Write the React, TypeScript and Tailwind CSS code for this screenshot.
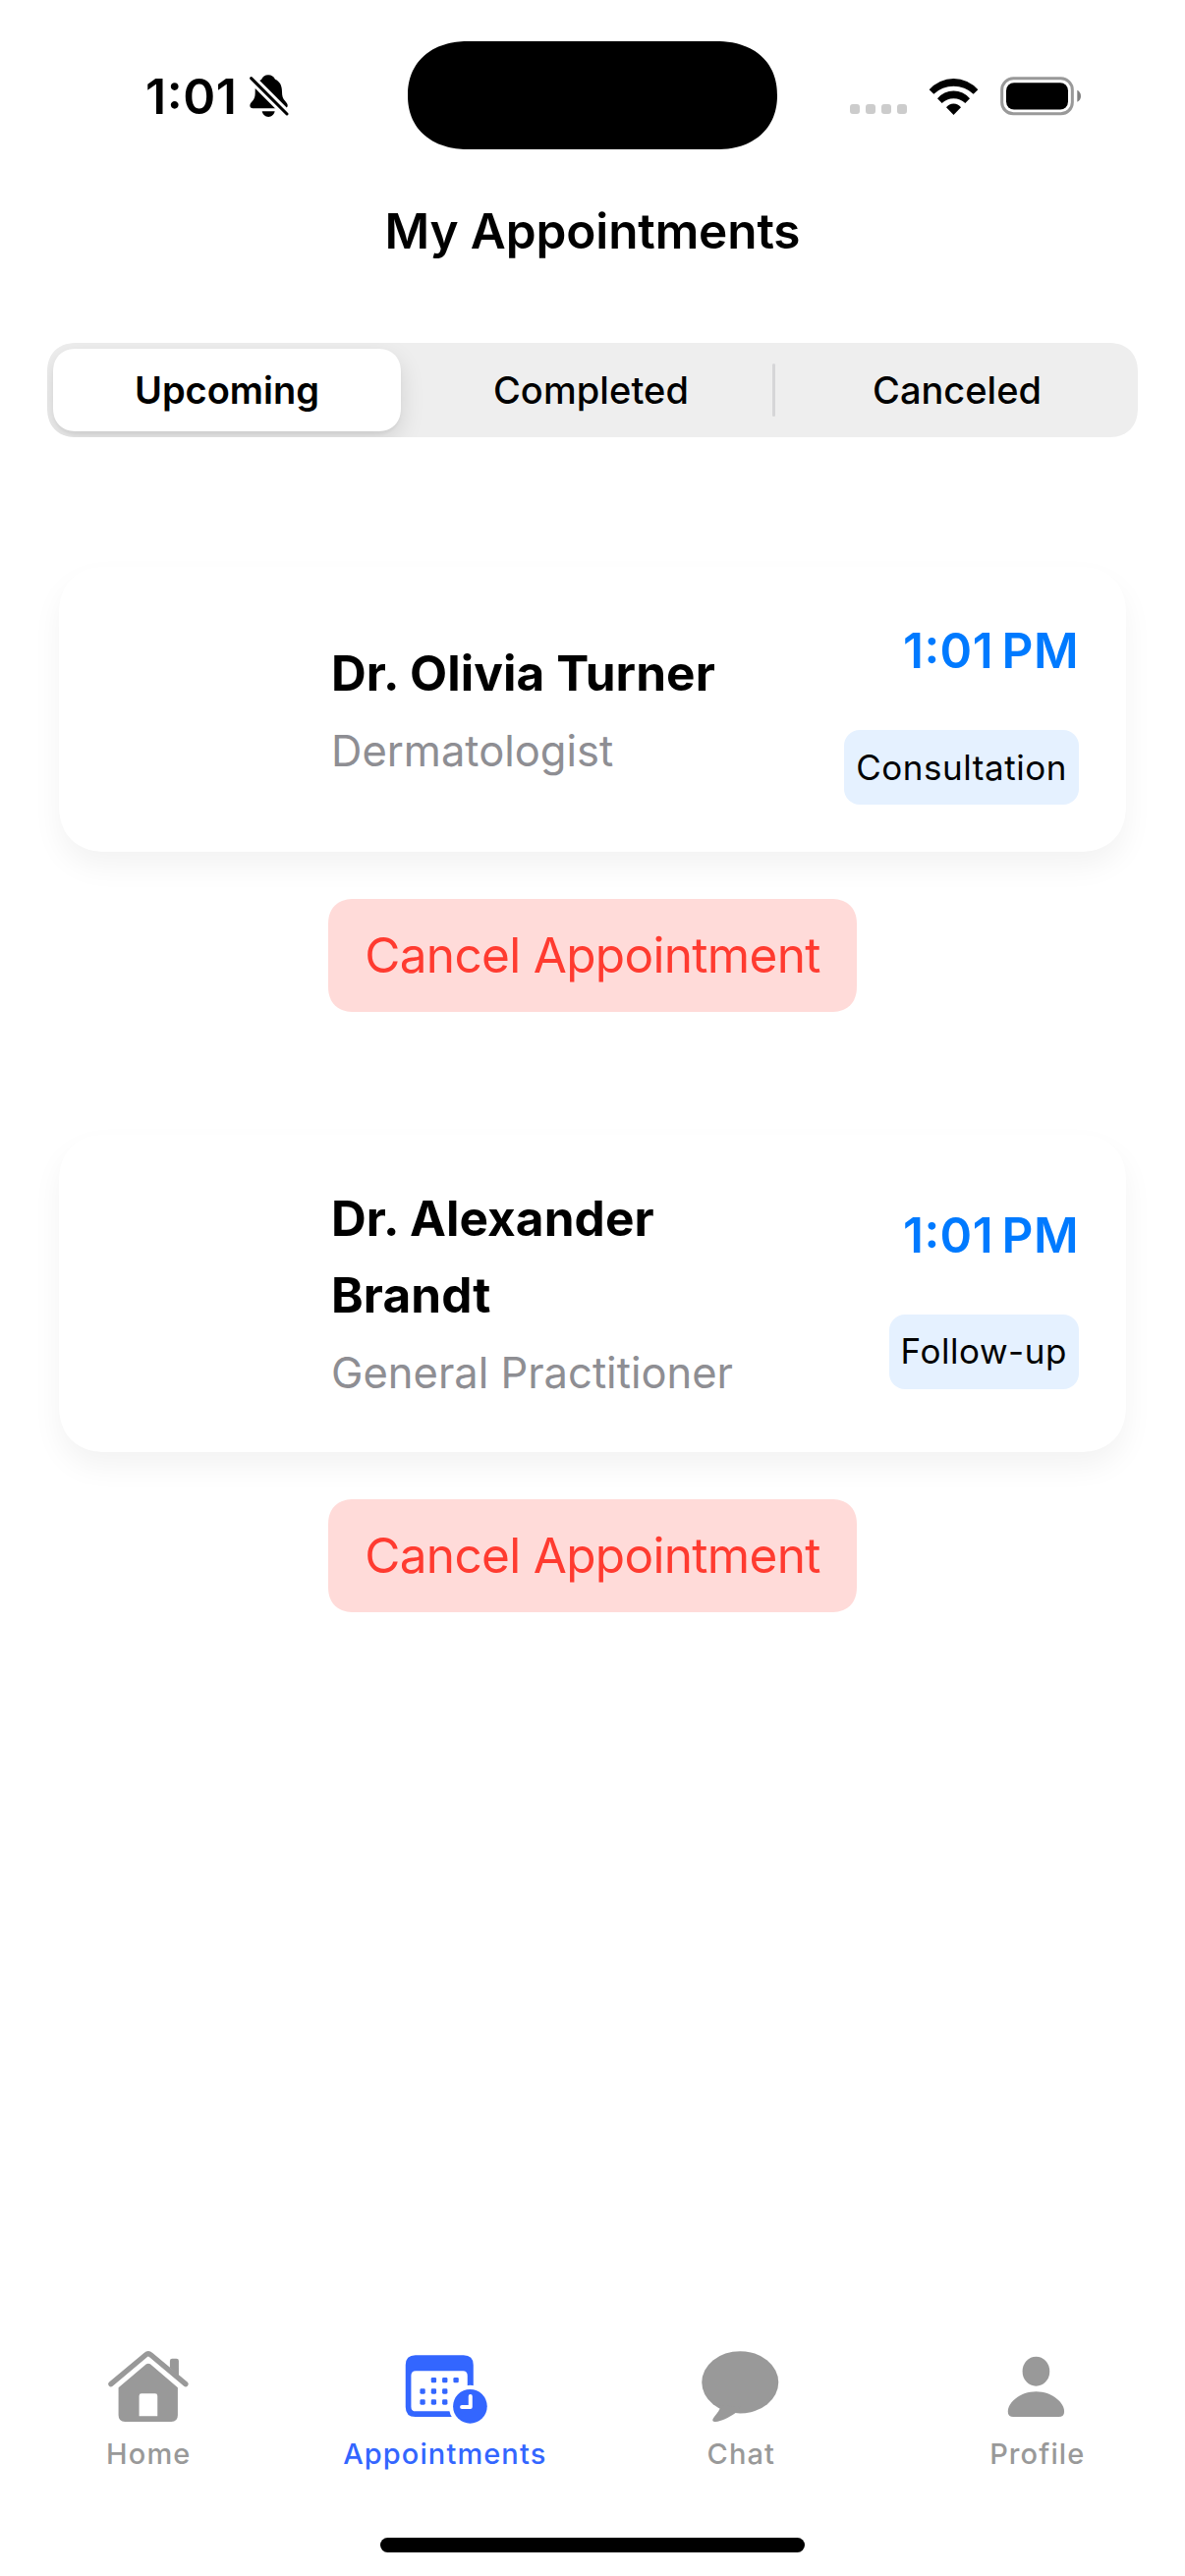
import type { ReactNode } from "react";

type Appointment = { name: string; specialty: string; time: string; kind: string; tall?: boolean };

const appointments: Appointment[] = [
  { name: "Dr. Olivia Turner", specialty: "Dermatologist", time: "1:01\u202FPM", kind: "Consultation" },
  { name: "Dr. Alexander Brandt", specialty: "General Practitioner", time: "1:01\u202FPM", kind: "Follow-up", tall: true },
];

function BellSlash() {
  return (
    <svg viewBox="464 140 120 132" className="h-[44px] w-[40px]" fill="black">
      <path d="M474 243C464 243 462 232 470 224C479 214 481 206 481 196V190C481 172 488 160 500 155C504 146 511 141 521 141C531 141 538 146 542 154C556 160 563 172 563 192C563 205 565 213 573 221L577 226C583 232 580 243 571 243Z" />
      <path d="M502 252H541C539 262 531 269 521.5 269C512 269 504 262 502 252Z" />
      <path d="M455 137L592 274" stroke="white" strokeWidth="27" />
      <path d="M469 151L578 260" stroke="black" strokeWidth="9" strokeLinecap="round" />
    </svg>
  );
}

function Wifi() {
  return (
    <svg viewBox="495 114 153 117" className="h-[39px] w-[51px]" fill="black">
      <path d="M497 151A99 99 0 0 1 646 151L632 164A88 88 0 0 0 511 164Z" />
      <path d="M522 178A64 64 0 0 1 621 178L607 192A51 51 0 0 0 536 192Z" />
      <path d="M549 205A28 28 0 0 1 594 205L571.500 228Z" />
    </svg>
  );
}

function Battery() {
  return (
    <svg viewBox="714 113 249 120" className="h-[40px] w-[83px]">
      <rect x="719" y="118.500" width="215" height="108" rx="35" fill="none" stroke="#999" strokeWidth="9" />
      <rect x="732" y="131.500" width="189" height="82" rx="24" fill="black" />
      <path d="M949 154C956 157 960 164 960 172C960 180 956 187 949 190Z" fill="#808080" />
    </svg>
  );
}

function HomeIcon() {
  return (
    <svg viewBox="77.250 60 270 240" className="h-[80px] w-[90px]" fill="currentColor">
      <path d="M98 170L204 81Q212 74 220 81L326 170" fill="none" stroke="currentColor" strokeWidth="16" strokeLinecap="round" />
      <path d="M278 120V99Q278 92 285 92H298Q305 92 305 99V145Z" />
      <path
        fillRule="evenodd"
        d="M121 181L206 109Q212 105 218 109L302 181V265Q302 285 282 285H141Q121 285 121 265ZM184 206V268H240V206Q240 199 233 199H191Q184 199 184 206Z"
      />
    </svg>
  );
}

const calendarDots = [
  [1085, 158], [1119, 158], [1153, 158],
  [1051, 192], [1085, 192], [1119, 192],
  [1051, 225], [1085, 225], [1119, 225],
];

function CalendarIcon() {
  return (
    <svg viewBox="981.750 60 270 240" className="h-[80px] w-[90px]" fill="currentColor">
      <path
        fillRule="evenodd"
        d="M1029 82H1176Q1206 82 1206 112V240Q1206 270 1176 270H1029Q999 270 999 240V112Q999 82 1029 82ZM1030 130Q1016 130 1016 144V239Q1016 253 1030 253H1174Q1188 253 1188 239V144Q1188 130 1174 130Z"
      />
      {calendarDots.map(([x, y]) => (
        <rect key={`${x}-${y}`} x={x - 8} y={y - 8} width="16" height="16" rx="4" />
      ))}
      <circle cx="1196" cy="238" r="65" fill="white" />
      <circle cx="1196" cy="238" r="52" />
      <path d="M1197 207V240H1171" fill="none" stroke="white" strokeWidth="12" strokeLinecap="round" strokeLinejoin="round" />
    </svg>
  );
}

function ChatIcon() {
  return (
    <svg viewBox="146.250 60 270 240" className="h-[80px] w-[90px]" fill="currentColor">
      <ellipse cx="279" cy="164.500" rx="117" ry="95" />
      <path d="M217 235V245C213 256 203 264 196 276C193 282 197 286 204 285C222 284 243 273 264 259L280 240Z" />
    </svg>
  );
}

function PersonIcon() {
  return (
    <svg viewBox="1050.750 60 270 240" className="h-[80px] w-[90px]" fill="currentColor">
      <ellipse cx="1184" cy="131" rx="41.500" ry="45" />
      <path d="M1098 254C1098 226 1136 193 1184 193C1232 193 1270 226 1270 254Q1270 270 1253 270H1115Q1098 270 1098 254Z" />
    </svg>
  );
}

function StatusBar() {
  return (
    <div className="flex h-[194px] shrink-0 pt-[42px]">
      <div className="flex h-[112px] w-[415px] items-center pl-[148px]">
        <span className="text-[50px] leading-[60px] font-semibold tracking-[0.6px]">1:01</span>
        <div className="ml-[12px]">
          <BellSlash />
        </div>
      </div>
      <div className="h-[110px] w-[376px] rounded-[62px/55px] bg-black [corner-shape:superellipse(1.15)]" />
      <div className="flex h-[112px] flex-1 items-center pl-[74px]">
        <div className="flex gap-[6px] pt-[26px]">
          {[0, 1, 2, 3].map((i) => (
            <span key={i} className="size-[10px] rounded-[3px] bg-[#ccc]" />
          ))}
        </div>
        <div className="ml-[22px]">
          <Wifi />
        </div>
        <div className="ml-[22px]">
          <Battery />
        </div>
      </div>
    </div>
  );
}

function SegmentedControl() {
  return (
    <div className="mx-[48px] mt-[72px] flex h-[96px] shrink-0 items-center overflow-hidden rounded-[30px] bg-[#eee] text-[38px] font-medium [corner-shape:superellipse(1.2)]">
      <div className="ml-[6px] flex h-[84px] w-[354px] items-center justify-center rounded-[24px] bg-white font-semibold shadow-[0_9px_24px_rgba(0,0,0,0.12),0_3px_3px_rgba(0,0,0,0.04)] [corner-shape:superellipse(1.2)]">
        Upcoming
      </div>
      <div className="flex w-[378px] items-center justify-center pl-[9px] tracking-[0.1px]">Completed</div>
      <div className="h-[54px] w-[3px] rounded-full bg-[#d6d6d8]" />
      <div className="flex flex-1 items-center justify-center pl-px">Canceled</div>
    </div>
  );
}

function AppointmentCard({ a, className }: { a: Appointment; className: string }) {
  return (
    <section className={`flex flex-col items-center ${className}`}>
      <div
        className={`flex w-[1086px] items-center justify-between rounded-[48px] bg-white px-[48px] shadow-[0_15px_30px_rgba(0,0,0,0.05)] [corner-shape:superellipse(1.2)] ${
          a.tall ? "h-[323px]" : "h-[290px]"
        }`}
      >
        <div className="w-[229px]" />
        <div className="flex w-[430px] flex-col gap-[13px] pb-[8px]">
          <h2 className="text-[49.500px] leading-[78px] font-bold tracking-[0.1px]">{a.name}</h2>
          <p className="text-[43.500px] leading-[54px] text-[#8e8e93]">{a.specialty}</p>
        </div>
        <div className="flex flex-1 flex-col items-end gap-[50px] pt-[7px]">
          <span className="text-[49.500px] leading-[61px] font-semibold tracking-[0.4px] text-[#007aff]">{a.time}</span>
          <span className="flex h-[76px] items-center rounded-[16px] bg-[#e5f1ff] px-[12px] text-[35px] tracking-[0.55px]">
            {a.kind}
          </span>
        </div>
      </div>
      <button className="mt-[48px] h-[115px] w-[538px] rounded-[26px] bg-[#ffdbd9] text-[49.500px] tracking-[-0.68px] text-[#ff3b30] [corner-shape:superellipse(1.2)]">
        Cancel Appointment
      </button>
    </section>
  );
}

function Tab({ icon, label, active }: { icon: ReactNode; label: string; active?: boolean }) {
  return (
    <div className={`flex flex-1 flex-col items-center ${active ? "text-[#3366ff]" : "text-[#999]"}`}>
      {icon}
      <span className="mt-[7px] pl-px text-[29px] leading-[41px] font-medium tracking-[1.1px]">{label}</span>
    </div>
  );
}

export default function App() {
  return (
    <div className="flex h-[2622px] w-[1206px] flex-col overflow-hidden bg-white font-[Inter,sans-serif] text-black [font-feature-settings:'calt'_1]">
      <StatusBar />
      <h1 className="h-[83px] shrink-0 text-center text-[49.500px] leading-[83px] font-semibold tracking-[-0.12px]">
        My Appointments
      </h1>
      <SegmentedControl />
      <AppointmentCard a={appointments[0]} className="mt-[132px]" />
      <AppointmentCard a={appointments[1]} className="mt-[125px]" />
      <nav className="mt-auto flex">
        <Tab icon={<HomeIcon />} label="Home" />
        <Tab icon={<CalendarIcon />} label="Appointments" active />
        <Tab icon={<ChatIcon />} label="Chat" />
        <Tab icon={<PersonIcon />} label="Profile" />
      </nav>
      <div className="mx-auto mt-[65px] mb-[24px] h-[15px] w-[432px] shrink-0 rounded-full bg-black" />
    </div>
  );
}
